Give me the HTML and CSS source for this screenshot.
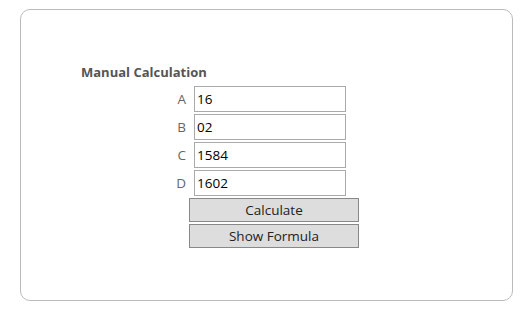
FILE: index.html
```html
<!DOCTYPE html>
<html lang="en">
<head>
    <meta charset="UTF-8">
    <title>Manual Calculation</title>
    <link rel="stylesheet" href="styles.css">
</head>
<body>
    <div class="card">
        <h3 class="title">Manual Calculation</h3>
        <form class="calcForm">
            <label for="a">A</label>
            <input type="text" id="a" value="16">
            <label for="b">B</label>
            <input type="text" id="b" value="02">
            <label for="c">C</label>
            <input type="text" id="c" value="1584">
            <label for="d">D</label>
            <input type="text" id="d" value="1602">
            <div class="buttons">
                <button type="button">Calculate</button>
                <button type="button">Show Formula</button>
            </div>
        </form>
    </div>
</body>
</html>
```
FILE: styles.css
```css
body{
    margin: 0;
    font-family: "Open Sans", "Noto Sans", sans-serif;
    background: #fff;
}
.card{
    box-sizing: border-box;
    margin: 9px 0 0 20px;
    width: 493px;
    height: 292px;
    border: 1px solid #bbb;
    border-radius: 10px;
    padding: 52px 0 0 60px;
}
.title{
    margin: 0 0 4px 0;
    font-size: 13px;
    font-weight: bold;
    color: #555;
    line-height: 20px;
}
.calcForm{
    display: grid;
    grid-template-columns: 105px 152px;
    column-gap: 8px;
    row-gap: 2px;
}
label{
    text-align: right;
    font-size: 13.5px;
    color: #666;
    line-height: 26px;
}
input{
    box-sizing: border-box;
    width: 152px;
    height: 26px;
    margin: 0;
    border: 1px solid #aaa;
    padding: 0 2px;
    font-family: inherit;
    font-size: 13.5px;
    color: #000;
    outline: none;
}
.buttons{
    grid-column: 1 / 3;
    display: flex;
    flex-direction: column;
    gap: 2px;
    padding-left: 108px;
}
button{
    box-sizing: border-box;
    width: 170px;
    height: 24px;
    margin: 0;
    border: 1px solid #888;
    background: #ddd;
    font-family: inherit;
    font-size: 13.5px;
    color: #222;
    padding: 0;
}
```
